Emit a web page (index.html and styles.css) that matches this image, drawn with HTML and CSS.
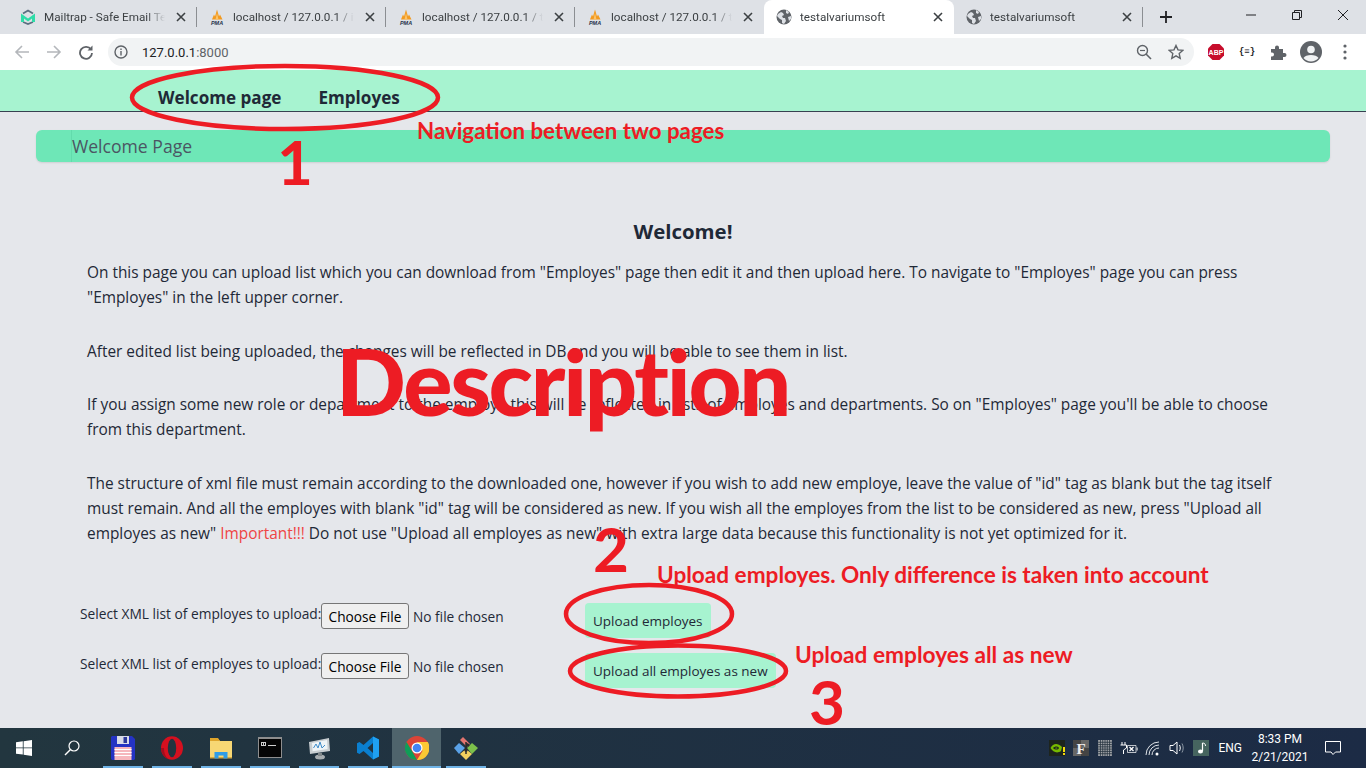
FILE: index.html
```html
<!DOCTYPE html>
<html lang="en">
<head>
  <meta charset="UTF-8">
  <title>testalvariumsoft</title>
  <link rel="stylesheet" href="styles.css">
</head>
<body>
  <svg class="defs" width="0" height="0">
    <symbol id="globe" viewBox="0 0 16 16">
      <circle cx="8" cy="8" r="7.5" fill="#5f6368"/>
      <path d="M2 5l3-2 2 1 1 2-2 1 1 2 2 0 1 3-2 3-2-1 0-3-2-1-3-3zM10 1l3 2-1 2-2-1zM12 8l3-1 0 3-2 2z" fill="#dee1e6"/>
    </symbol>
    <symbol id="pma" viewBox="0 0 16 16">
      <path d="M3 10.500L5 5.500l1 2L8 .5l2 7 1-2 2.500 5z" fill="#f39a1f"/>
      <path d="M6.500 10.500L8 4l1.500 6.500z" fill="#fbc46a"/>
      <text x="8" y="15.500" class="pma-text">PMA</text>
    </symbol>
    <symbol id="close" viewBox="0 0 10 10">
      <path d="M1 1l8 8M9 1l-8 8" stroke="#3c4043" stroke-width="1.600" fill="none"/>
    </symbol>
  </svg>

  <div class="tabstrip">
    <div class="tab tab-first">
      <svg class="favicon" viewBox="0 0 16 16"><path d="M3 4.500L8 1.500l5 3M3 13l5 2 5-2" stroke="#5c6f80" stroke-width="1.800" fill="none"/><path d="M1 4.500l7 5 7-5V13h-3V9.500l-4 3-4-3V13H1z" fill="#2fdca8"/></svg>
      <span class="tab-title">Mailtrap - Safe Email Testing</span>
      <svg class="tab-close"><use href="#close"/></svg>
    </div>
    <div class="tab">
      <svg class="favicon"><use href="#pma"/></svg>
      <span class="tab-title">localhost / 127.0.0.1 / ivan</span>
      <svg class="tab-close"><use href="#close"/></svg>
    </div>
    <div class="tab">
      <svg class="favicon"><use href="#pma"/></svg>
      <span class="tab-title">localhost / 127.0.0.1 / test</span>
      <svg class="tab-close"><use href="#close"/></svg>
    </div>
    <div class="tab tab-nosep">
      <svg class="favicon"><use href="#pma"/></svg>
      <span class="tab-title">localhost / 127.0.0.1 / test</span>
      <svg class="tab-close"><use href="#close"/></svg>
    </div>
    <div class="tab tab-active">
      <svg class="favicon"><use href="#globe"/></svg>
      <span class="tab-title">testalvariumsoft</span>
      <svg class="tab-close"><use href="#close"/></svg>
    </div>
    <div class="tab">
      <svg class="favicon"><use href="#globe"/></svg>
      <span class="tab-title">testalvariumsoft</span>
      <svg class="tab-close"><use href="#close"/></svg>
    </div>
    <svg class="newtab" viewBox="0 0 12 12"><path d="M6 0v12M0 6h12" stroke="#202124" stroke-width="1.800"/></svg>
    <div class="winbtns">
      <svg viewBox="0 0 12 12"><path d="M1 6h10" stroke="#202124"/></svg>
      <svg viewBox="0 0 12 12"><path d="M1.500 3.500h7v7h-7zM3.500 3.500v-2h7v7h-2" stroke="#202124" fill="none"/></svg>
      <svg viewBox="0 0 12 12"><path d="M1 1l10 10M11 1l-10 10" stroke="#202124" fill="none"/></svg>
    </div>
  </div>

  <div class="toolbar">
    <svg class="tool" viewBox="0 0 16 16"><path d="M15 8H2M8 2L2 8l6 6" stroke="#b4b7bb" stroke-width="1.600" fill="none"/></svg>
    <svg class="tool" viewBox="0 0 16 16"><path d="M1 8h13M8 2l6 6-6 6" stroke="#b4b7bb" stroke-width="1.600" fill="none"/></svg>
    <svg class="tool" viewBox="0 0 16 16"><path d="M13 5.500A6 6 0 1 0 14 9" stroke="#5f6368" stroke-width="1.800" fill="none"/><path d="M14.500 1.500v5h-5z" fill="#5f6368"/></svg>
    <div class="omnibox">
      <svg class="info" viewBox="0 0 14 14"><circle cx="7" cy="7" r="6" stroke="#5f6368" stroke-width="1.400" fill="none"/><path d="M6.300 6h1.400v4.500H6.300zM6.300 3.500h1.400v1.400H6.300z" fill="#5f6368"/></svg>
      <span class="url">127.0.0.1<span class="url-port">:8000</span></span>
      <span class="omni-spacer"></span>
      <svg class="omni-icon" viewBox="0 0 16 16"><circle cx="6.500" cy="6.500" r="5" stroke="#5f6368" stroke-width="1.400" fill="none"/><path d="M10 10l5 5" stroke="#5f6368" stroke-width="1.600"/><path d="M4 6.500h5" stroke="#5f6368" stroke-width="1.200"/></svg>
      <svg class="omni-icon" viewBox="0 0 16 16"><path d="M8 1.500l2 4.400 4.800.5-3.600 3.200 1 4.700L8 11.900l-4.200 2.400 1-4.700L1.200 6.400 6 5.900z" stroke="#5f6368" stroke-width="1.400" fill="none"/></svg>
    </div>
    <div class="extensions">
      <svg class="ext" viewBox="0 0 18 18"><path d="M5.500 1h7L17 5.500v7L12.500 17h-7L1 12.500v-7z" fill="#c70d2c"/><text x="9" y="11.700" class="abp">ABP</text></svg>
      <span class="ext-json">{≡}</span>
      <svg class="ext" viewBox="0 0 18 18"><path d="M2 6h4V4.500a2 2 0 0 1 4 0V6h4v4h1.500a2 2 0 0 1 0 4H14v3H2v-3.500h1a2 2 0 0 0 0-4H2z" fill="#5f6368"/></svg>
      <svg class="ext ext-user" viewBox="0 0 22 22"><circle cx="11" cy="11" r="11" fill="#5f6368"/><circle cx="11" cy="8.500" r="3.800" fill="#f1f3f4"/><path d="M3.500 17c2-4 13-4 15 0a10 10 0 0 1-15 0z" fill="#f1f3f4"/></svg>
      <svg class="ext-menu" viewBox="0 0 4 16"><circle cx="2" cy="2" r="1.600" fill="#5f6368"/><circle cx="2" cy="8" r="1.600" fill="#5f6368"/><circle cx="2" cy="14" r="1.600" fill="#5f6368"/></svg>
    </div>
  </div>

  <main class="page">
    <nav class="navbar">
      <a class="nav-link">Welcome page</a>
      <a class="nav-link">Employes</a>
    </nav>
    <header class="page-head"><h2 class="page-title">Welcome Page</h2></header>
    <section class="intro">
      <h3 class="intro-title">Welcome!</h3>
      <p>On this page you can upload list which you can download from "Employes" page then edit it and then upload here. To navigate to "Employes" page you can press "Employes" in the left upper corner.</p>
      <p>After edited list being uploaded, the changes will be reflected in DB and you will be able to see them in list.</p>
      <p>If you assign some new role or department to the employe this will be reflected in lists of employes and departments. So on "Employes" page you'll be able to choose from this department.</p>
      <p>The structure of xml file must remain according to the downloaded one, however if you wish to add new employe, leave the value of "id" tag as blank but the tag itself must remain. And all the employes with blank "id" tag will be considered as new. If you wish all the employes from the list to be considered as new, press "Upload all employes as new" <span class="warn">Important!!!</span> Do not use "Upload all employes as new" with extra large data because this functionality is not yet optimized for it.</p>
    </section>
    <form class="upload-row">
      <label class="upload-label">Select XML list of employes to upload:</label>
      <input class="upload-file" type="file">
      <button class="upload-btn" type="button">Upload employes</button>
    </form>
    <form class="upload-row">
      <label class="upload-label">Select XML list of employes to upload:</label>
      <input class="upload-file" type="file">
      <button class="upload-btn" type="button">Upload all employes as new</button>
    </form>

    <!-- red annotations drawn on top of the screenshot -->
    <svg class="marks" viewBox="0 0 1366 768">
      <ellipse cx="285" cy="97.500" rx="153" ry="31.500"/>
      <ellipse cx="649" cy="614" rx="83" ry="29"/>
      <ellipse cx="678" cy="671" rx="108" ry="25.500"/>
    </svg>
    <span class="note note-nav">Navigation between two pages</span>
    <span class="note note-num note-1">1</span>
    <span class="note note-desc">Description</span>
    <span class="note note-num note-2">2</span>
    <span class="note note-up1">Upload employes. Only difference is taken into account</span>
    <span class="note note-up2">Upload employes all as new</span>
    <span class="note note-num note-3">3</span>
  </main>

  <footer class="taskbar">
    <svg class="start" viewBox="0 0 16 16"><path d="M0 2.300l6.800-1v6.200H0zM7.600 1.200L16 0v7.500H7.600zM0 8.300h6.800v6.300L0 13.700zM7.600 8.300H16V16l-8.400-1.200z" fill="#fff"/></svg>
    <svg class="search" viewBox="0 0 16 16"><circle cx="10" cy="6" r="5" stroke="#fff" fill="none" stroke-width="1.200"/><path d="M6.500 9.500L1 15" stroke="#fff" stroke-width="1.400"/></svg>
    <div class="app app-open">
      <svg viewBox="0 0 24 24"><path d="M1 0h20l3 3v20l-1 1H1l-1-1V1z" fill="#2433c4"/><path d="M6 0h12v8H6z" fill="#d8dce8"/><path d="M12.500 1h3.500v6h-3.500z" fill="#2c3a9c"/><path d="M3.500 11h17v13h-17z" fill="#f6b7bd"/><path d="M3.500 13.500h17M3.500 16.500h17M3.500 19.500h17" stroke="#fff"/></svg>
    </div>
    <div class="app app-open">
      <svg viewBox="0 0 24 24"><ellipse cx="12" cy="12" rx="11" ry="11.800" fill="#d5101f"/><path d="M1 12A11 11.800 0 0 0 9 23.400C5 21 4 16 4 12z" fill="#a30d1c"/><ellipse cx="12" cy="12" rx="4.200" ry="9.200" fill="#22343f"/></svg>
    </div>
    <div class="app app-open">
      <svg viewBox="0 0 24 24"><path d="M1 3h8l2 2h12v17H1z" fill="#f7d774"/><path d="M1 2h8l2 3H1z" fill="#dfa52b"/><path d="M1 21h22v1.500H1z" fill="#d9a93c"/><path d="M5.500 22.500V16h13v6.500h-4v-3h-5v3z" fill="#2f9ce6"/></svg>
    </div>
    <div class="app app-open">
      <svg viewBox="0 0 24 24"><path d="M0 1h24v21H0z" fill="#8e8e8e"/><path d="M1 3h22v18H1z" fill="#050505"/><path d="M3 6h5v4H3zM10 9h8v1h-8z" fill="#cfcfcf"/><path d="M4 7h1v2H4zM6 7h1v2H6z" fill="#050505"/></svg>
    </div>
    <div class="app app-open">
      <svg viewBox="0 0 24 24"><path d="M2 6l20-4 1 13-20 3z" fill="#c8ced1"/><path d="M5 7l15-3 .6 9-15 2.300z" fill="#eef4f7"/><path d="M6.500 12l2.500-4 2 4 2-6 2 6 3-3" stroke="#3f8cc9" fill="none"/><ellipse cx="13" cy="21" rx="5" ry="2.500" fill="#a7adb0"/><path d="M11 17h4v3h-4z" fill="#7f8689"/></svg>
    </div>
    <div class="app app-open">
      <svg viewBox="0 0 24 24"><path fill-rule="evenodd" d="M17 .5l6 3v17l-6 3-9.500-8.500-4 3-2.500-1.200V7.200L3.500 6l4 3zM17 7l-5.500 5 5.500 5z" fill="#0a7fd0"/><path d="M17 .5l6 3v17l-6 3z" fill="#1fa0f2"/></svg>
    </div>
    <div class="app app-open app-active">
      <svg viewBox="0 0 24 24"><circle cx="12" cy="12" r="12" fill="#db4437"/><path d="M12 24A12 12 0 0 1 1.500 6L7 15l5 9z" fill="#0f9d58"/><path d="M12 24l5.500-9L12 6h10.800A12 12 0 0 1 12 24z" fill="#fcc934"/><circle cx="12" cy="12" r="5.500" fill="#fff"/><circle cx="12" cy="12" r="4.300" fill="#4285f4"/></svg>
    </div>
    <div class="app app-open">
      <svg viewBox="0 0 24 24"><path d="M6 4l3-3 7 7-3 3z" fill="#e2746f"/><path d="M0 12l5-5 6 5-6 6z" fill="#5aa2e8"/><path d="M13 12l5-5 6 5-6 6z" fill="#7cc04b"/><path d="M6 18l6-5 6 5-6 6z" fill="#f2d15f"/><path d="M12 6v12M13 7l-1 7" stroke="#2b2b2b" stroke-width="1.500"/><circle cx="12" cy="14" r="1.800" fill="#2b2b2b"/><circle cx="14" cy="9" r="1.500" fill="#2b2b2b"/></svg>
    </div>
    <span class="tray-spacer"></span>
    <div class="tray">
      <svg viewBox="0 0 16 16"><path d="M0 0h16v16H0z" fill="#1d241d"/><path d="M1.500 8C4 3 9 3 13 7l-1 4C8 14 4 12 1.500 8z" fill="#76b900"/><path d="M4 8c2-2 5-2 6 0-1 2-4 2-6 0z" fill="#1d241d"/><path d="M6 8c.7-.7 2-.7 2.500 0-.5.7-1.800.7-2.500 0z" fill="#76b900"/><path d="M14 7h2v5h-2zM14 13h2v2h-2z" fill="#f5d90a"/></svg>
      <svg viewBox="0 0 16 16"><path d="M0 0h16v16H0z" fill="#666"/><path d="M0 0h8v8H0zM8 8h8v8H8z" fill="#444"/><text x="8" y="13.500" class="tray-f">F</text></svg>
      <svg viewBox="0 0 12 14"><path d="M0 0h12v14H0z" fill="#a3a6aa"/><path d="M2 0v14M4 0v14M6 0v14M8 0v14M10 0v14M0 2h12M0 4h12M0 6h12M0 8h12M0 10h12M0 12h12" stroke="#26333f" stroke-width=".7"/></svg>
      <svg class="tray-batt" viewBox="0 0 18 16"><path d="M2 2v3M5 2v3M.5 5h6v3L3.500 10v4" stroke="#fff" fill="none"/><path d="M7.500 5.500h8.500v7H7.500z" stroke="#fff" fill="none" opacity=".7"/><path d="M9.500 7l4 4M13.500 7l-4 4" stroke="#fff" stroke-width="1.300"/><path d="M16.500 7.500h1.300v3h-1.300z" fill="#fff" opacity=".7"/></svg>
      <svg viewBox="0 0 16 16"><path d="M1 15a13 13 0 0 1 13-13M4 15a10 10 0 0 1 10-10M7 15a7 7 0 0 1 7-7" stroke="#dfe3e8" fill="none"/><circle cx="12" cy="14" r="1.500" fill="#fff"/></svg>
      <svg viewBox="0 0 16 16"><path d="M1 5.500h3L8 2v12L4 10.500H1z" stroke="#fff" fill="none"/><path d="M10.500 5c1 2 1 4 0 6" stroke="#fff" fill="none"/><path d="M13 3.500c1.600 3 1.600 6 0 9" stroke="#8d99a5" fill="none"/></svg>
      <svg viewBox="0 0 16 16"><path d="M0 0h16v16H0z" fill="#46655f"/><path d="M9.500 3v8" stroke="#fff" stroke-width="1.200"/><ellipse cx="7.500" cy="11.500" rx="2.500" ry="2" fill="#fff"/><path d="M9.500 3c2 0 3 1 3 3" stroke="#fff" fill="none"/></svg>
    </div>
    <span class="lang">ENG</span>
    <div class="clock"><span>8:33 PM</span><span>2/21/2021</span></div>
    <svg class="notif" viewBox="0 0 18 16"><path d="M1.500 1.500h15v10.500h-5L9 14.500 7 12H1.500z" stroke="#fff" fill="none"/></svg>
  </footer>
</body>
</html>
```

FILE: styles.css
```css
* {
  box-sizing: border-box;
}

html, body {
  margin: 0;
  height: 100%;
}

body {
  width: 1366px;
  height: 768px;
  display: flex;
  flex-direction: column;
  overflow: hidden;
  font-family: Roboto, "Liberation Sans", sans-serif;
  color: #1f2937;
  background: #e5e7eb;
}

.defs {
  position: absolute;
}

.pma-text {
  font: italic bold 5.500px "Liberation Sans", sans-serif;
  fill: #26324a;
  text-anchor: middle;
}

/* browser tabs */
.tabstrip {
  height: 34px;
  flex: none;
  display: flex;
  background: #dee1e6;
}

.tab {
  width: 189px;
  height: 34px;
  padding: 0 10px 0 12px;
  display: flex;
  align-items: center;
  gap: 8px;
  font-size: 11.700px;
  color: #3c4043;
  background-image: linear-gradient(#8b8e92, #8b8e92);
  background-size: 1px 20px;
  background-position: right 7px;
  background-repeat: no-repeat;
}

.tab-first {
  width: 197px;
  padding-left: 20px;
}

.tab-nosep {
  background-image: none;
}

.tab-active {
  background: #fff;
  border-radius: 8px 8px 0 0;
  width: 190px;
}

.favicon {
  width: 16px;
  height: 16px;
  flex: none;
}

.tab-title {
  flex: 1;
  white-space: nowrap;
  overflow: hidden;
  -webkit-mask-image: linear-gradient(90deg, #000 85%, transparent);
  mask-image: linear-gradient(90deg, #000 85%, transparent);
}

.tab-close {
  width: 10px;
  height: 10px;
  flex: none;
  margin: 0 1px 0 3px;
}

.newtab {
  width: 12px;
  height: 12px;
  margin: 11px 0 0 17px;
}

.winbtns {
  margin-left: auto;
  display: flex;
  gap: 34px;
  padding: 9px 17px 0 0;
}

.winbtns svg {
  width: 12px;
  height: 12px;
}

/* address bar row */
.toolbar {
  height: 36px;
  flex: none;
  display: flex;
  align-items: center;
  gap: 16px;
  padding-left: 14px;
  background: #fff;
}

.tool {
  width: 16px;
  height: 16px;
  flex: none;
}

.omnibox {
  width: 1086px;
  height: 28px;
  margin-left: -2px;
  padding: 0 10px 0 6px;
  display: flex;
  align-items: center;
  gap: 14px;
  border-radius: 14px;
  background: #f1f3f4;
  font-size: 13px;
}

.info {
  width: 14px;
  height: 14px;
}

.url {
  color: #202124;
}

.url-port {
  color: #5f6368;
}

.omni-spacer {
  flex: 1;
}

.omni-icon {
  width: 16px;
  height: 16px;
  margin-left: 2px;
}

.extensions {
  display: flex;
  align-items: center;
  gap: 13px;
  margin-left: -3px;
}

.ext {
  width: 18px;
  height: 18px;
}

.ext-user {
  width: 22px;
  height: 22px;
}

.abp {
  font: bold 7px "Liberation Sans", sans-serif;
  fill: #fff;
  text-anchor: middle;
}

.ext-json {
  width: 18px;
  font: bold 9px "Liberation Mono", monospace;
  color: #202124;
  text-align: center;
}

.ext-menu {
  width: 4px;
  height: 16px;
  margin-left: 8px;
}

/* page */
.page {
  flex: 1;
  position: relative;
  background: #e5e7eb;
  font-family: "Open Sans", sans-serif;
}

.navbar {
  height: 42px;
  padding: 14px 0 0 158px;
  display: flex;
  align-items: center;
  gap: 37px;
  background: #a7f3d0;
  border-bottom: 1px solid #374151;
}

.nav-link {
  font-size: 17.100px;
  font-weight: 700;
  color: #1f2937;
}

.page-head {
  height: 32px;
  margin: 18px 36px 0;
  padding-left: 35px;
  display: flex;
  border-radius: 6px;
  background: #6ee7b7;
  box-shadow: 0 1px 2px rgba(0, 0, 0, .1);
}

.page-title {
  flex: 1;
  margin: 0;
  border-left: 1px solid #62dbac;
  font-size: 17.600px;
  line-height: 33px;
  font-weight: 400;
  color: #4b5563;
}

.intro {
  padding: 0 87px 29px;
  font-size: 15.400px;
  line-height: 25px;
}

.intro-title {
  margin: 55px 0 15px;
  font-size: 20.400px;
  line-height: 28px;
  font-weight: 700;
  text-align: center;
}

.intro p {
  margin: 0 0 28.500px;
}

.warn {
  color: #ef4444;
}

.upload-row {
  margin: 0 0 0 80px;
  height: 50px;
  display: flex;
  align-items: flex-start;
  font-size: 13.750px;
}

.upload-label {
  width: 241px;
  padding-top: 1px;
  white-space: nowrap;
}

.upload-file {
  width: 264px;
  height: 26px;
  font: 13.700px/26px "Open Sans", sans-serif;
}

.upload-file::file-selector-button {
  width: 88px;
  height: 26px;
  margin-right: 4px;
  padding: 0;
  border: 1px solid #767676;
  border-radius: 3px;
  background: #efefef;
  color: #000;
  font: 13.700px "Open Sans", sans-serif;
}

.upload-btn {
  height: 35px;
  padding: 0 8px;
  border: 0;
  border-radius: 4px;
  background: #a7f3d0;
  color: #1f2937;
  font: 13.500px "Open Sans", sans-serif;
}

/* annotations */
.marks {
  position: absolute;
  left: 0;
  top: -70px;
  width: 1366px;
  height: 768px;
  pointer-events: none;
}

.marks ellipse {
  fill: none;
  stroke: #ed1c24;
  stroke-width: 4.500;
}

.note {
  position: absolute;
  font-family: Lato, sans-serif;
  font-weight: 700;
  color: #ed1c24;
  white-space: nowrap;
  line-height: 1;
}

.note-nav {
  left: 417px;
  top: 50px;
  font-size: 22.300px;
}

.note-desc {
  left: 336px;
  top: 265px;
  font-size: 92px;
  font-weight: 900;
  letter-spacing: -2.300px;
}

.note-num {
  font-size: 62px;
}

.note-1 {
  left: 277px;
  top: 60px;
}

.note-2 {
  left: 593px;
  top: 447px;
}

.note-3 {
  left: 809px;
  top: 600px;
}

.note-up1 {
  left: 657px;
  top: 494px;
  font-size: 22.600px;
}

.note-up2 {
  left: 795px;
  top: 574px;
  font-size: 22.700px;
}

/* windows taskbar */
.taskbar {
  height: 40px;
  flex: none;
  display: flex;
  align-items: center;
  background: linear-gradient(90deg, #22363f, #1c2b45);
  color: #fff;
}

.start {
  width: 16px;
  height: 16px;
  margin: 0 32px 0 16px;
  flex: none;
}

.search {
  width: 16px;
  height: 16px;
  margin-right: 18px;
  flex: none;
}

.app {
  width: 49px;
  height: 40px;
  display: flex;
  align-items: center;
  justify-content: center;
  flex: none;
}

.app svg {
  width: 24px;
  height: 24px;
}

.app-open {
  background-image: linear-gradient(#6fb3e6, #6fb3e6);
  background-size: 40px 2px;
  background-position: center bottom;
  background-repeat: no-repeat;
}

.app-active {
  background-color: #4f646c;
  background-size: 100% 2px;
}

.tray-spacer {
  flex: 1;
}

.tray {
  display: flex;
  align-items: center;
  gap: 8px;
}

.tray svg {
  width: 16px;
  height: 16px;
}

.tray .tray-batt {
  width: 18px;
  margin: 0 -1px;
}

.tray-f {
  font: bold 15px "Liberation Serif", serif;
  fill: #eee;
  text-anchor: middle;
}

.lang {
  font-size: 12px;
  margin-left: 9px;
}

.clock {
  width: 76px;
  display: flex;
  flex-direction: column;
  align-items: center;
  gap: 4px;
  font-size: 12px;
}

.notif {
  width: 18px;
  height: 16px;
  margin: 0 24px 0 6px;
}
```
